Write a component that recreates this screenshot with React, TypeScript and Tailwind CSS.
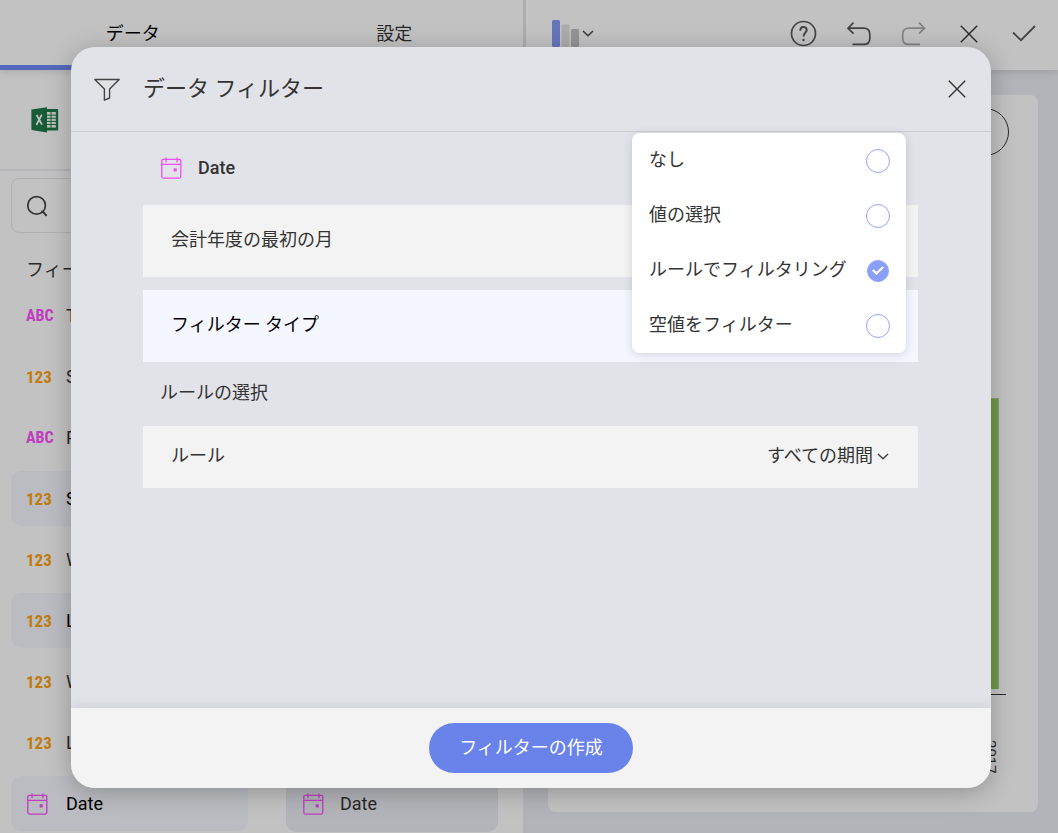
import { useState } from "react";

type FieldKind = "ABC" | "123" | "date";

const fields: { id: number; kind: FieldKind; name: string; active: boolean }[] = [
  { id: 1, kind: "ABC", name: "T", active: false },
  { id: 2, kind: "123", name: "S", active: false },
  { id: 3, kind: "ABC", name: "P", active: false },
  { id: 4, kind: "123", name: "S", active: true },
  { id: 5, kind: "123", name: "W", active: false },
  { id: 6, kind: "123", name: "L", active: true },
  { id: 7, kind: "123", name: "W", active: false },
  { id: 8, kind: "123", name: "L", active: false },
  { id: 9, kind: "date", name: "Date", active: true },
];

const filterTypes = ["なし", "値の選択", "ルールでフィルタリング", "空値をフィルター"];

function CalendarIcon() {
  return (
    <svg className="ml-px h-[22px] w-[21px] shrink-0" viewBox="0 0 21 22" fill="none" stroke="#f04df0" strokeWidth="1.3" aria-hidden="true">
      <rect x="0.8" y="2.3" width="19" height="18.8" rx="1.5" />
      <path d="M0.8 7.3H19.8M5 0.5V5.2M16 0.5V5.2" />
      <rect x="12.6" y="11.2" width="3.2" height="3.2" rx="0.5" fill="#f04df0" stroke="none" />
    </svg>
  );
}

function CloseIcon() {
  return (
    <svg className="size-[18px]" viewBox="0 0 18 18" fill="none" stroke="#333" strokeWidth="1.4" aria-hidden="true">
      <path d="M0.8 0.8L17.2 17.2M17.2 0.8L0.8 17.2" />
    </svg>
  );
}

function ChevronIcon() {
  return (
    <svg className="h-[7px] w-3 shrink-0" viewBox="0 0 12 7" fill="none" stroke="#444" strokeWidth="1.5" aria-hidden="true">
      <path d="M1 1L6 5.8L11 1" />
    </svg>
  );
}

function ExcelIcon() {
  return (
    <svg className="h-[26px] w-7" viewBox="0 0 28 26" aria-label="Excel" role="img">
      <rect x="14" y="2" width="13.2" height="21.6" rx="1" fill="#1f7345" />
      <path d="M16 5H24.8V20.6H16Z" fill="#e8f0ea" />
      <path d="M16 8.2H25M16 11.3H25M16 14.4H25M16 17.5H25M20 5V21" stroke="#1f7345" strokeWidth="1" />
      <path d="M0.4 2.4L16 0.2V25.4L0.4 23Z" fill="#1f7345" />
      <path d="M5.6 8L11 17.6M10.8 7.6L5.4 18" stroke="#f3f3f3" strokeWidth="1.7" />
    </svg>
  );
}

function KindBadge({ kind }: { kind: FieldKind }) {
  if (kind === "date") return <CalendarIcon />;
  return (
    <span
      className={
        kind === "ABC"
          ? "font-['Roboto_Condensed','Roboto',sans-serif] text-base leading-6 font-bold text-[#f04df0]"
          : "font-['Roboto_Condensed','Roboto',sans-serif] text-[17px] leading-6 font-bold text-[#f09a12]"
      }
    >
      {kind}
    </span>
  );
}

function Toolbar() {
  const button = "flex size-[27px] items-center justify-center";
  return (
    <div className="flex flex-1 items-center justify-between pr-[21px] pb-[3px] pl-[26px]">
      <button className="flex items-center gap-0.5" aria-label="グラフの種類">
        <svg className="h-[27px] w-7" viewBox="0 0 28 27" aria-hidden="true">
          <rect x="0" y="0" width="8" height="27" rx="1.5" fill="#8092ee" />
          <rect x="9.5" y="4.5" width="8" height="22.5" rx="1.5" fill="#d8d8d8" />
          <rect x="19" y="9" width="8" height="18" rx="1.5" fill="#b9b9b9" />
        </svg>
        <ChevronIcon />
      </button>
      <div className="flex items-center gap-7">
        <button className={button} aria-label="ヘルプ">
          <svg className="size-[27px]" viewBox="0 0 27 27" fill="none" stroke="#555" strokeWidth="1.7" aria-hidden="true">
            <circle cx="13.5" cy="13.5" r="12" />
            <path d="M10.3 10.8C10.2 5.8 16.9 6 16.7 10.1C16.6 12.6 13.5 12.9 13.5 16.6" strokeWidth="2" />
            <circle cx="13.5" cy="20" r="1.2" fill="#555" stroke="none" />
          </svg>
        </button>
        <button className={button} aria-label="元に戻す">
          <svg className="h-[25px] w-[26px]" viewBox="0 0 26 25" fill="none" stroke="#555" strokeWidth="1.7" aria-hidden="true">
            <path d="M7.5 1.6L2 7.2L7.5 12.6M2 7.2H17.5Q23.8 7.2 23.8 13.2V17.4Q23.8 23.4 17.5 23.4H6.5" />
          </svg>
        </button>
        <button className={button} aria-label="やり直す">
          <svg className="h-[25px] w-[26px]" viewBox="0 0 26 25" fill="none" stroke="#a4a4a4" strokeWidth="1.7" aria-hidden="true">
            <path d="M18 1.6L23.5 7.2L18 12.6M23.5 7.2H8Q1.7 7.2 1.7 13.2V17.4Q1.7 23.4 8 23.4H19" />
          </svg>
        </button>
        <button className={button} aria-label="キャンセル">
          <CloseIcon />
        </button>
        <button className={button} aria-label="完了">
          <svg className="h-[17px] w-6" viewBox="0 0 24 17" fill="none" stroke="#555" strokeWidth="1.8" aria-hidden="true">
            <path d="M1 7.5L9 15.2L23 1" />
          </svg>
        </button>
      </div>
    </div>
  );
}

function FieldPanel() {
  return (
    <div className="flex w-[523px] shrink-0 bg-[#f3f3f3]">
      <div className="w-[259px]">
        <div className="flex h-[101px] items-center border-b-2 border-[#e2e2e9] pl-[31px]">
          <ExcelIcon />
        </div>
        <label className="mt-[7px] ml-[11px] flex h-[55px] items-center rounded-lg border border-[#dcdce0] pl-[15px]">
          <svg className="size-[22px] shrink-0" viewBox="0 0 22 22" fill="none" stroke="#444" strokeWidth="1.7" aria-hidden="true">
            <circle cx="9.6" cy="10.4" r="8.8" />
            <path d="M14.2 16.4L16.2 16.8L19.6 20.8" strokeWidth="2" />
          </svg>
          <input type="search" aria-label="検索" className="w-full bg-transparent outline-none" />
        </label>
        <h2 className="mt-[25px] h-[30px] pl-[26px] text-lg leading-6 text-[#333]">フィールド</h2>
        <ul className="flex flex-col gap-1.5 pl-[11px]">
          {fields.map((field) => (
            <li
              key={field.id}
              className={
                field.active
                  ? "flex h-[55px] w-[237px] items-center rounded-[10px] bg-[#eaebf2] pl-[15px] text-black"
                  : "flex h-[55px] w-[237px] items-center pl-[15px] text-[#333]"
              }
            >
              <span className="flex w-10 shrink-0">
                <KindBadge kind={field.kind} />
              </span>
              <span className="text-lg leading-6">{field.name}</span>
            </li>
          ))}
        </ul>
      </div>
      <div className="flex flex-1 flex-col justify-end pb-px pl-[27px]">
        <div className="flex h-[55px] w-[212px] items-center rounded-[10px] bg-[#e0e1e8] pb-0.5 pl-4 text-[#333]">
          <span className="flex w-[38px] shrink-0">
            <CalendarIcon />
          </span>
          <span className="text-lg leading-6">Date</span>
        </div>
      </div>
    </div>
  );
}

function ChartPanel() {
  return (
    <div className="flex flex-1 bg-[#e0e1e8] pt-[25px] pr-5 pb-[21px] pl-[25px]">
      <div className="flex flex-1 flex-col items-end rounded-lg bg-[#f3f3f3]">
        <div className="mt-[13px] mr-[29px] size-12 rounded-full border-[1.5px] border-[#333]" />
        <div className="mt-[242px] mr-[39px] h-[291px] w-14 border-t border-r border-[#a9cd8a] bg-[#8fc05c]" />
        <div className="mt-[5px] mr-8 w-40 border-t border-[#333]" />
        <span className="mt-[45px] mr-10 text-[15px] leading-4 text-[#333] [writing-mode:vertical-rl]">2017</span>
      </div>
    </div>
  );
}

function FilterTypeMenu() {
  const [selected, setSelected] = useState(2);
  return (
    <fieldset className="absolute right-3 bottom-[9px] w-[274px] rounded-lg bg-white shadow-[0_2px_10px_rgba(60,60,90,0.18)]">
      {filterTypes.map((name, index) => (
        <label key={name} className="flex h-[55px] items-center justify-between pr-4 pl-[17px] text-lg leading-6 text-[#333]">
          <span className="pb-0.5">{name}</span>
          <span className="grid size-6 place-items-center">
            <input
              type="radio"
              name="filter-type"
              checked={selected === index}
              onChange={() => setSelected(index)}
              className="col-start-1 row-start-1 size-6 appearance-none rounded-full border-[1.5px] border-[#94a5fa] checked:size-[22px] checked:bg-[#8b9ff9]"
            />
            {selected === index && (
              <svg className="pointer-events-none z-10 col-start-1 row-start-1 h-[9px] w-3" viewBox="0 0 12 9" fill="none" stroke="#fff" strokeWidth="2.2" aria-hidden="true">
                <path d="M0.8 4L4.5 7.4L11.2 1" />
              </svg>
            )}
          </span>
        </label>
      ))}
    </fieldset>
  );
}

function FilterDialog() {
  return (
    <div
      role="dialog"
      aria-labelledby="dialog-title"
      className="flex flex-1 flex-col overflow-hidden rounded-3xl bg-[#e2e3e9] shadow-[0_4px_24px_rgba(0,0,0,0.25)]"
    >
      <header className="flex h-[85px] shrink-0 items-center border-b border-[#cccdd4] pr-[25px] pl-[23px]">
        <svg className="h-6 w-[26px]" viewBox="0 0 26 24" fill="none" stroke="#444" strokeWidth="1.4" strokeLinejoin="round" aria-hidden="true">
          <path d="M0.8 2.5H25.2L15.6 12V21L10.4 23.2V12Z" />
        </svg>
        <h1 id="dialog-title" className="flex-1 pl-[23px] text-[22px] leading-8 text-[#333]">
          データ フィルター
        </h1>
        <button aria-label="閉じる">
          <CloseIcon />
        </button>
      </header>
      <div className="flex flex-1 flex-col pr-[73px] pl-[72px] text-lg leading-6 text-[#333]">
        <div className="flex h-[73px] items-center gap-4 pb-0.5 pl-[17px]">
          <CalendarIcon />
          <span className="font-medium">Date</span>
        </div>
        <div className="flex h-[72px] items-center bg-[#f3f3f3] pb-0.5 pl-7">会計年度の最初の月</div>
        <div className="relative mt-[13px] flex h-[72px] items-center bg-[#f4f7ff] pb-0.5 pl-7 text-black">
          フィルター タイプ
          <FilterTypeMenu />
        </div>
        <h2 className="flex h-16 items-center pb-0.5 pl-[17px]">ルールの選択</h2>
        <div className="flex h-[62px] items-center justify-between bg-[#f3f3f3] pr-[29px] pb-0.5 pl-7">
          <label htmlFor="rule">ルール</label>
          <span className="flex items-center gap-0.5">
            <select id="rule" className="appearance-none bg-transparent">
              <option>すべての期間</option>
            </select>
            <ChevronIcon />
          </span>
        </div>
      </div>
      <footer className="flex h-20 shrink-0 items-center justify-center bg-[#f3f3f3] shadow-[0_0_12px_rgba(0,0,0,0.12)]">
        <button className="h-[50px] rounded-full bg-[#6a83ea] px-[30px] text-lg leading-6 text-white">フィルターの作成</button>
      </footer>
    </div>
  );
}

export default function App() {
  return (
    <div className="relative flex min-h-screen flex-col bg-[#e0e1e8] font-['Roboto','Noto_Sans_CJK_JP',sans-serif]">
      <header className="z-10 flex h-[70px] shrink-0 bg-[#f3f3f3] shadow-[0_2px_8px_rgba(0,0,0,0.12)]">
        <nav className="flex w-[526px] shrink-0 border-r-[3px] border-[#d9d9d9] text-lg leading-6">
          <button className="flex-1 border-b-[5px] border-[#6a83ea] pt-0.5 pl-1 text-black">データ</button>
          <button className="flex-1 border-b-[5px] border-transparent pt-0.5 pl-1 text-[#333]">設定</button>
        </nav>
        <Toolbar />
      </header>
      <main className="flex flex-1">
        <FieldPanel />
        <ChartPanel />
      </main>
      <div className="absolute inset-0 z-20 flex bg-black/20 pt-[47px] pr-[67px] pb-[45px] pl-[71px]">
        <FilterDialog />
      </div>
    </div>
  );
}
